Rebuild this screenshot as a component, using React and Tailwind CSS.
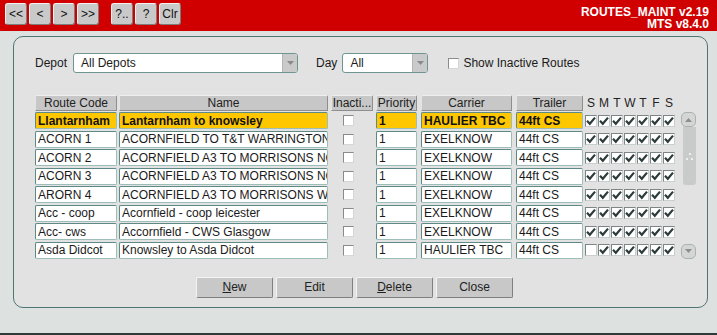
import React from 'react'

const ROWS = [
  { code: 'Llantarnham', name: 'Lantarnham to knowsley', pri: '1', carrier: 'HAULIER TBC', trailer: '44ft CS', days: [1, 1, 1, 1, 1, 1, 1], hot: true },
  { code: 'ACORN 1', name: 'ACORNFIELD TO T&T WARRINGTON', pri: '1', carrier: 'EXELKNOW', trailer: '44ft CS', days: [1, 1, 1, 1, 1, 1, 1] },
  { code: 'ACORN 2', name: 'ACORNFIELD A3 TO MORRISONS NORTHWICH', pri: '1', carrier: 'EXELKNOW', trailer: '44ft CS', days: [1, 1, 1, 1, 1, 1, 1] },
  { code: 'ACORN 3', name: 'ACORNFIELD A3 TO MORRISONS NORTHWICH', pri: '1', carrier: 'EXELKNOW', trailer: '44ft CS', days: [1, 1, 1, 1, 1, 1, 1] },
  { code: 'ARORN 4', name: 'ACORNFIELD A3 TO MORRISONS WAKEFIELD', pri: '1', carrier: 'EXELKNOW', trailer: '44ft CS', days: [1, 1, 1, 1, 1, 1, 1] },
  { code: 'Acc - coop', name: 'Acornfield - coop leicester', pri: '1', carrier: 'EXELKNOW', trailer: '44ft CS', days: [1, 1, 1, 1, 1, 1, 1] },
  { code: 'Acc- cws', name: 'Accornfield - CWS Glasgow', pri: '1', carrier: 'EXELKNOW', trailer: '44ft CS', days: [1, 1, 1, 1, 1, 1, 1] },
  { code: 'Asda Didcot', name: 'Knowsley to Asda Didcot', pri: '1', carrier: 'HAULIER TBC', trailer: '44ft CS', days: [0, 1, 1, 1, 1, 1, 1] },
]

const DAYS = ['S', 'M', 'T', 'W', 'T', 'F', 'S']

function NavButton({ children }) {
  return (
    <button className="w-[22px] h-[22px] flex items-center justify-center rounded-[3px] bg-[#c9c9c9] border border-t-[#f2f2f2] border-l-[#f2f2f2] border-b-[#7c7c7c] border-r-[#7c7c7c] text-[12px] text-[#111] leading-none">
      {children}
    </button>
  )
}

function HeadCell({ w, children }) {
  return (
    <div className={`${w} h-[16px] flex items-center justify-center bg-[#c7c7c7] rounded-t-[2px] border border-t-[#efefef] border-l-[#e4e4e4] border-r-[#8e8e8e] border-b-[#8e8e8e] text-[12px] text-[#222] whitespace-nowrap overflow-hidden`}>
      {children}
    </div>
  )
}

function Field({ w, hot, children }) {
  return (
    <div
      className={`${w} h-[17px] flex items-center pl-[2px] rounded-[2px] border border-[#9dbdb9] border-l-[#5d8a86] border-t-[#5d8a86] overflow-hidden whitespace-nowrap text-[12px] ${
        hot ? 'bg-[#ffc700] font-bold text-[#111]' : 'bg-white text-[#1a1a1a]'
      }`}
    >
      {children}
    </div>
  )
}

function Box({ checked }) {
  return (
    <div className="w-[12px] h-[12px] bg-white border border-[#7d8585] border-r-[#c9cfcf] border-b-[#c9cfcf] flex items-center justify-center">
      {checked ? (
        <svg width="10" height="10" viewBox="0 0 10 10">
          <path d="M1 4.8 L3.8 7.8 L9 1.6" fill="none" stroke="#2d3b3b" strokeWidth="2.2" />
        </svg>
      ) : null}
    </div>
  )
}

function Select({ w, value }) {
  return (
    <div className={`${w} h-[20px] flex items-stretch bg-white border border-[#6e9591] rounded-[3px] overflow-hidden`}>
      <div className="flex-1 flex items-center pl-[7px] text-[12px] text-[#1a1a1a]">{value}</div>
      <div className="w-[15px] bg-[#cacaca] border-l border-[#b5b5b5] flex items-center justify-center">
        <svg width="7" height="4" viewBox="0 0 7 4">
          <path d="M0 0 L7 0 L3.5 4 Z" fill="#8a8a8a" />
        </svg>
      </div>
    </div>
  )
}

function ActionButton({ children }) {
  return (
    <button className="w-[77px] h-[21px] flex items-center justify-center bg-[#c8c8c8] rounded-[2px] border border-t-[#f4f4f4] border-l-[#f4f4f4] border-r-[#7f7f7f] border-b-[#7f7f7f] text-[12px] text-[#222]">
      {children}
    </button>
  )
}

export default function App() {
  return (
    <div className="w-[717px] h-[335px] flex flex-col bg-[#dde2e1] border-b-[2px] border-[#2f3a3a] font-['Liberation_Sans',Arial,sans-serif] overflow-hidden">
      {/* red title bar */}
      <div className="h-[31px] shrink-0 bg-[#d10000] flex items-start pl-[5px] pt-[3px]">
        <div className="flex gap-[2px]">
          <NavButton>&lt;&lt;</NavButton>
          <NavButton>&lt;</NavButton>
          <NavButton>&gt;</NavButton>
          <NavButton>&gt;&gt;</NavButton>
        </div>
        <div className="flex gap-[2px] ml-[12px]">
          <NavButton>?..</NavButton>
          <NavButton>?</NavButton>
          <NavButton>Clr</NavButton>
        </div>
        <div className="ml-auto pr-[8px] pt-[3px] text-right text-white font-bold text-[12px] leading-[12px]">
          <div>ROUTES_MAINT v2.19</div>
          <div>MTS v8.4.0</div>
        </div>
      </div>

      <div className="pl-[13px] pt-[5px]">
        <div className="w-[695px] h-[272px] rounded-[10px] border border-[#4f7572] bg-[#e2e2e2] flex flex-col">
          {/* filters */}
          <div className="flex items-center h-[20px] mt-[16px] pl-[21px] text-[12px] text-[#1a1a1a]">
            <span>Depot</span>
            <div className="ml-[6px]">
              <Select w="w-[225px]" value="All Depots" />
            </div>
            <span className="ml-[18px]">Day</span>
            <div className="ml-[5px]">
              <Select w="w-[86px]" value="All" />
            </div>
            <div className="ml-[20px] w-[11px] h-[11px] bg-white border border-[#8a8a8a] border-r-[#d6d6d6] border-b-[#d6d6d6]" />
            <span className="ml-[4px]">Show Inactive Routes</span>
          </div>

          {/* table header */}
          <div className="flex items-end mt-[22px] pl-[21px]">
            <HeadCell w="w-[82px]">Route Code</HeadCell>
            <div className="ml-[2px]"><HeadCell w="w-[209px]">Name</HeadCell></div>
            <div className="ml-[3px]"><HeadCell w="w-[42px]">Inacti...</HeadCell></div>
            <div className="ml-[3px]"><HeadCell w="w-[41px]">Priority</HeadCell></div>
            <div className="ml-[4px]"><HeadCell w="w-[91px]">Carrier</HeadCell></div>
            <div className="ml-[4px]"><HeadCell w="w-[67px]">Trailer</HeadCell></div>
            <div className="ml-[2px] flex gap-[1px] h-[16px] items-center text-[12px] text-[#222]">
              {DAYS.map((d, i) => (
                <span key={i} className="w-[12px] text-center">{d}</span>
              ))}
            </div>
          </div>

          {/* rows + scrollbar */}
          <div className="flex mt-[1px] pl-[21px]">
            <div className="flex flex-col gap-[1.5px]">
              {ROWS.map((r, i) => (
                <div key={i} className="flex items-center h-[17px]">
                  <Field w="w-[82px]" hot={r.hot}>{r.code}</Field>
                  <div className="ml-[2px]"><Field w="w-[209px]" hot={r.hot}>{r.name}</Field></div>
                  <div className="ml-[3px] w-[42px] pl-[12px] flex items-center">
                    <div className="w-[11px] h-[11px] bg-white border border-[#8a8a8a] border-r-[#d6d6d6] border-b-[#d6d6d6]" />
                  </div>
                  <div className="ml-[3px]"><Field w="w-[41px]" hot={r.hot}>{r.pri}</Field></div>
                  <div className="ml-[4px]"><Field w="w-[91px]" hot={r.hot}>{r.carrier}</Field></div>
                  <div className="ml-[4px]"><Field w="w-[67px]" hot={r.hot}>{r.trailer}</Field></div>
                  <div className="ml-[2px] flex gap-[1px]">
                    {r.days.map((c, j) => (
                      <Box key={j} checked={!!c} />
                    ))}
                  </div>
                </div>
              ))}
            </div>

            {/* scrollbar */}
            <div className="ml-[6px] w-[15px] flex flex-col">
              <div className="h-[15px] rounded-[5px] bg-[#d4d6d6] border border-[#a9b1b1] flex items-center justify-center">
                <svg width="7" height="4" viewBox="0 0 7 4">
                  <path d="M0 4 L7 4 L3.5 0 Z" fill="#8a8e8e" />
                </svg>
              </div>
              <div className="h-[58px] ml-[2px] bg-[#c9caca] rounded-b-[3px] flex flex-col items-center justify-center gap-[3px]">
                <div className="flex gap-[3px]"><span className="w-[2px] h-[2px] bg-[#eee]" /></div>
                <div className="flex gap-[3px]"><span className="w-[2px] h-[2px] bg-[#eee]" /><span className="w-[2px] h-[2px] bg-[#eee]" /></div>
              </div>
              <div className="flex-1" />
              <div className="h-[15px] rounded-[5px] bg-[#d4d6d6] border border-[#a9b1b1] flex items-center justify-center">
                <svg width="7" height="4" viewBox="0 0 7 4">
                  <path d="M0 0 L7 0 L3.5 4 Z" fill="#8a8e8e" />
                </svg>
              </div>
            </div>
          </div>

          {/* actions */}
          <div className="flex gap-[3px] mt-[18px] ml-[182px]">
            <ActionButton><span className="underline">N</span>ew</ActionButton>
            <ActionButton>Edit</ActionButton>
            <ActionButton><span className="underline">D</span>elete</ActionButton>
            <ActionButton>Close</ActionButton>
          </div>
        </div>
      </div>
    </div>
  )
}
